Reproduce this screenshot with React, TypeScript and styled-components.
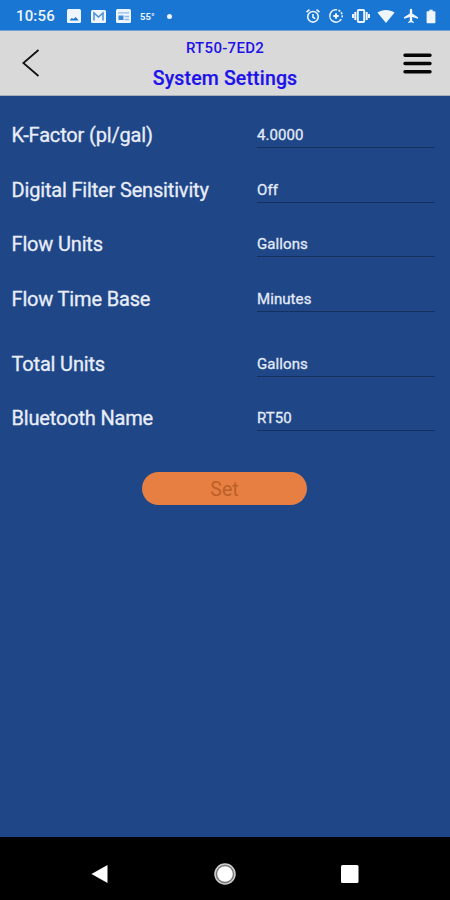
import React from "react";
import styled, { createGlobalStyle } from "styled-components";

const GlobalStyle = createGlobalStyle`
  * { box-sizing: border-box; }
  body { margin: 0; background: #1f4788; font-family: Roboto, sans-serif; }
`;

const Screen = styled.div`
  width: 450px;
  height: 900px;
  display: flex;
  flex-direction: column;
  background: #1f4788;
  overflow: hidden;
`;

const StatusBar = styled.div`
  height: 31px;
  flex: none;
  display: flex;
  justify-content: space-between;
  padding: 0 14px 0 16px;
  background: #1976d2;
  color: #eef5fd;
  border-bottom: 1px solid #6f9fd3;
`;

const StatusGroup = styled.div<{ $gap: number }>`
  display: flex;
  align-items: center;
  gap: ${(p) => p.$gap}px;
  height: 32px;
  svg { display: block; flex: none; }
`;

const Clock = styled.span`
  width: 41px;
  font-size: 15px;
  font-weight: 500;
  letter-spacing: 0.15px;
  white-space: nowrap;
`;

const Temperature = styled.span`
  width: 17px;
  margin-left: -1px;
  font-size: 9.5px;
  font-weight: 700;
  white-space: nowrap;
`;

const Dot = styled.span`
  width: 5px;
  height: 5px;
  border-radius: 50%;
  background: #eef5fd;
`;

const Header = styled.header`
  height: 65px;
  flex: none;
  display: grid;
  grid-template-columns: 60px 1fr 60px;
  background: #d9d9d9;
  border-bottom: 1px solid #a9b0bd;
`;

const IconButton = styled.button<{ $align: string }>`
  border: 0;
  padding: ${(p) => (p.$align === "flex-end" ? "0 18px 0 0" : "0 0 0 22px")};
  background: none;
  display: flex;
  align-items: center;
  justify-content: ${(p) => p.$align};
  svg { flex: none; }
`;

const Titles = styled.div`
  display: flex;
  flex-direction: column;
  align-items: center;
  color: #1d12ea;
  font-weight: 500;
  white-space: nowrap;
`;

const DeviceName = styled.div`
  margin-top: 7px;
  font-size: 15px;
  line-height: 20px;
  letter-spacing: 0.3px;
`;

const PageTitle = styled.h1`
  margin: 8px 0 0;
  font-size: 19.5px;
  line-height: 26px;
  font-weight: 500;
  letter-spacing: 0.15px;
  -webkit-text-stroke: 0.2px currentColor;
`;

const Main = styled.main`
  flex: 1;
  display: flex;
  flex-direction: column;
  padding: 12px 15px 0 12px;
`;

const Group = styled.section`
  margin-bottom: 10.5px;
`;

const Row = styled.label`
  height: 54.5px;
  display: grid;
  grid-template-columns: 245px 178px;
`;

const Label = styled.span`
  margin-left: -0.5px;
  font-size: 20px;
  line-height: 54px;
  letter-spacing: -0.17px;
  color: #e9edf8;
  -webkit-text-stroke: 0.3px currentColor;
  white-space: nowrap;
`;

const Value = styled.span`
  margin-top: 14px;
  height: 26px;
  line-height: 27px;
  font-size: 15px;
  letter-spacing: 0.08px;
  color: #e4eaf7;
  -webkit-text-stroke: 0.3px currentColor;
  border-bottom: 1px solid #14305f;
`;

const SetButton = styled.button`
  align-self: center;
  margin: 16px 0 0 2px;
  width: 165px;
  height: 33px;
  border: 0;
  border-radius: 17px;
  background: #e77e42;
  color: #bd6028;
  font: 400 19.5px/35px Roboto, sans-serif;
  padding: 0;
`;

const NavBar = styled.nav`
  height: 63px;
  flex: none;
  background: #000;
  display: flex;
  align-items: center;
  justify-content: space-between;
  padding: 11px 90px 0 89px;
  svg { display: block; }
`;

const flowSettings = [
  ["K-Factor (pl/gal)", "4.0000"],
  ["Digital Filter Sensitivity", "Off"],
  ["Flow Units", "Gallons"],
  ["Flow Time Base", "Minutes"],
];

const deviceSettings = [
  ["Total Units", "Gallons"],
  ["Bluetooth Name", "RT50"],
];

const SettingsGroup = ({ items }: { items: string[][] }) => (
  <Group>
    {items.map(([label, value]) => (
      <Row key={label}>
        <Label>{label}</Label>
        <Value>{value}</Value>
      </Row>
    ))}
  </Group>
);

const NotificationIcons = () => (
  <>
    <svg width="14" height="14" viewBox="0 0 14 14">
      <rect width="14" height="14" rx="1.5" fill="currentColor" />
      <path d="M2.5 11.5l2.2-2.6 1.8 1.2 2.2-2 3 3.4z" fill="#1976d2" />
    </svg>
    <svg width="15" height="13" viewBox="0 0 15 13">
      <rect width="15" height="13" rx="1.5" fill="currentColor" />
      <path d="M3 10.5V3l4.5 4L12 3v7.5" fill="none" stroke="#4c8ed6" strokeWidth="1.5" />
    </svg>
    <svg width="15" height="14" viewBox="0 0 15 14">
      <rect width="15" height="14" rx="1.5" fill="currentColor" />
      <path d="M2 3.8h11M8.5 7.5H13M8.5 10.5H13" stroke="#8fbbe8" strokeWidth="1.3" />
      <rect x="2.5" y="6.5" width="5" height="4.5" fill="#3a86d6" />
    </svg>
  </>
);

const SystemIcons = () => (
  <>
    <svg width="16" height="16" viewBox="0 0 16 16" fill="none" stroke="currentColor" strokeWidth="1.6">
      <circle cx="8" cy="8.8" r="5.3" />
      <path d="M1.5 4.2l3-2.6M14.5 4.2l-3-2.6M8 6v3.2l2.3 1.4" />
    </svg>
    <svg width="16" height="16" viewBox="0 0 16 16" fill="none" stroke="currentColor" strokeWidth="1.6">
      <path d="M9 1.8a6.2 6.2 0 1 0 4.3 9.4" />
      <path d="M10.5 2.3a6.2 6.2 0 0 1 3.6 7" strokeDasharray="2 1.2" />
      <path d="M8 5.3v5.4M5.3 8h5.4" strokeWidth="2" />
    </svg>
    <svg width="18" height="16" viewBox="0 0 18 16" fill="none" stroke="currentColor" strokeWidth="2">
      <rect x="5.8" y="2" width="6.4" height="12" rx="1" />
      <path d="M3.3 4v8M1 6v4M14.7 4v8M17 6v4" />
    </svg>
    <svg width="18" height="15" viewBox="0 0 18 15">
      <path d="M.4 3.6C5.4 0 12.6 0 17.6 3.6L9 14z" fill="currentColor" />
    </svg>
    <svg width="16" height="16" viewBox="0 0 16 16">
      <path d="M15 10.7V9.2L9.2 5.6V2a1.2 1.2 0 0 0-2.4 0v3.6L1 9.2v1.5L6.8 9v3.8l-1.6 1.1V15L8 14.2l2.8.8v-1.1l-1.6-1.1V9z" fill="currentColor" />
    </svg>
    <svg width="10" height="16" viewBox="3 0 10 16">
      <path d="M4.3 3.2h2V1.8h3.4v1.4h2c.4 0 .7.3.7.7v10.6c0 .4-.3.7-.7.7H4.3c-.4 0-.7-.3-.7-.7V3.9c0-.4.3-.7.7-.7z" fill="currentColor" />
    </svg>
  </>
);

export default function App() {
  return (
    <Screen>
      <GlobalStyle />
      <StatusBar>
        <StatusGroup $gap={10}>
          <Clock>10:56</Clock>
          <NotificationIcons />
          <Temperature>55°</Temperature>
          <Dot />
        </StatusGroup>
        <StatusGroup $gap={7.5}>
          <SystemIcons />
        </StatusGroup>
      </StatusBar>
      <Header>
        <IconButton $align="flex-start" aria-label="Back">
          <svg width="18" height="28" viewBox="0 0 18 28" fill="none" stroke="#111" strokeWidth="1.8">
            <path d="M16.5 1L1.3 14l15.2 13" />
          </svg>
        </IconButton>
        <Titles>
          <DeviceName>RT50-7ED2</DeviceName>
          <PageTitle>System Settings</PageTitle>
        </Titles>
        <IconButton $align="flex-end" aria-label="Menu">
          <svg width="29" height="21" viewBox="0 0 29 21" stroke="#050505" strokeWidth="3.4" strokeLinecap="round">
            <path d="M2 2.3h25M2 10.5h25M2 18.7h25" />
          </svg>
        </IconButton>
      </Header>
      <Main>
        <SettingsGroup items={flowSettings} />
        <SettingsGroup items={deviceSettings} />
        <SetButton>Set</SetButton>
      </Main>
      <NavBar>
        <svg width="20" height="20" viewBox="0 0 20 20">
          <path d="M2.5 10L18.5 1v18z" fill="#fff" />
        </svg>
        <svg width="22" height="22" viewBox="0 0 22 22">
          <circle cx="11" cy="11" r="10" fill="#777" stroke="#d0d0d0" strokeWidth="1.5" />
          <circle cx="11" cy="11" r="7.8" fill="#fff" />
        </svg>
        <svg width="20" height="20" viewBox="0 0 20 20">
          <rect x="1" y="1" width="17.5" height="18" rx="1.5" fill="#fff" />
        </svg>
      </NavBar>
    </Screen>
  );
}
